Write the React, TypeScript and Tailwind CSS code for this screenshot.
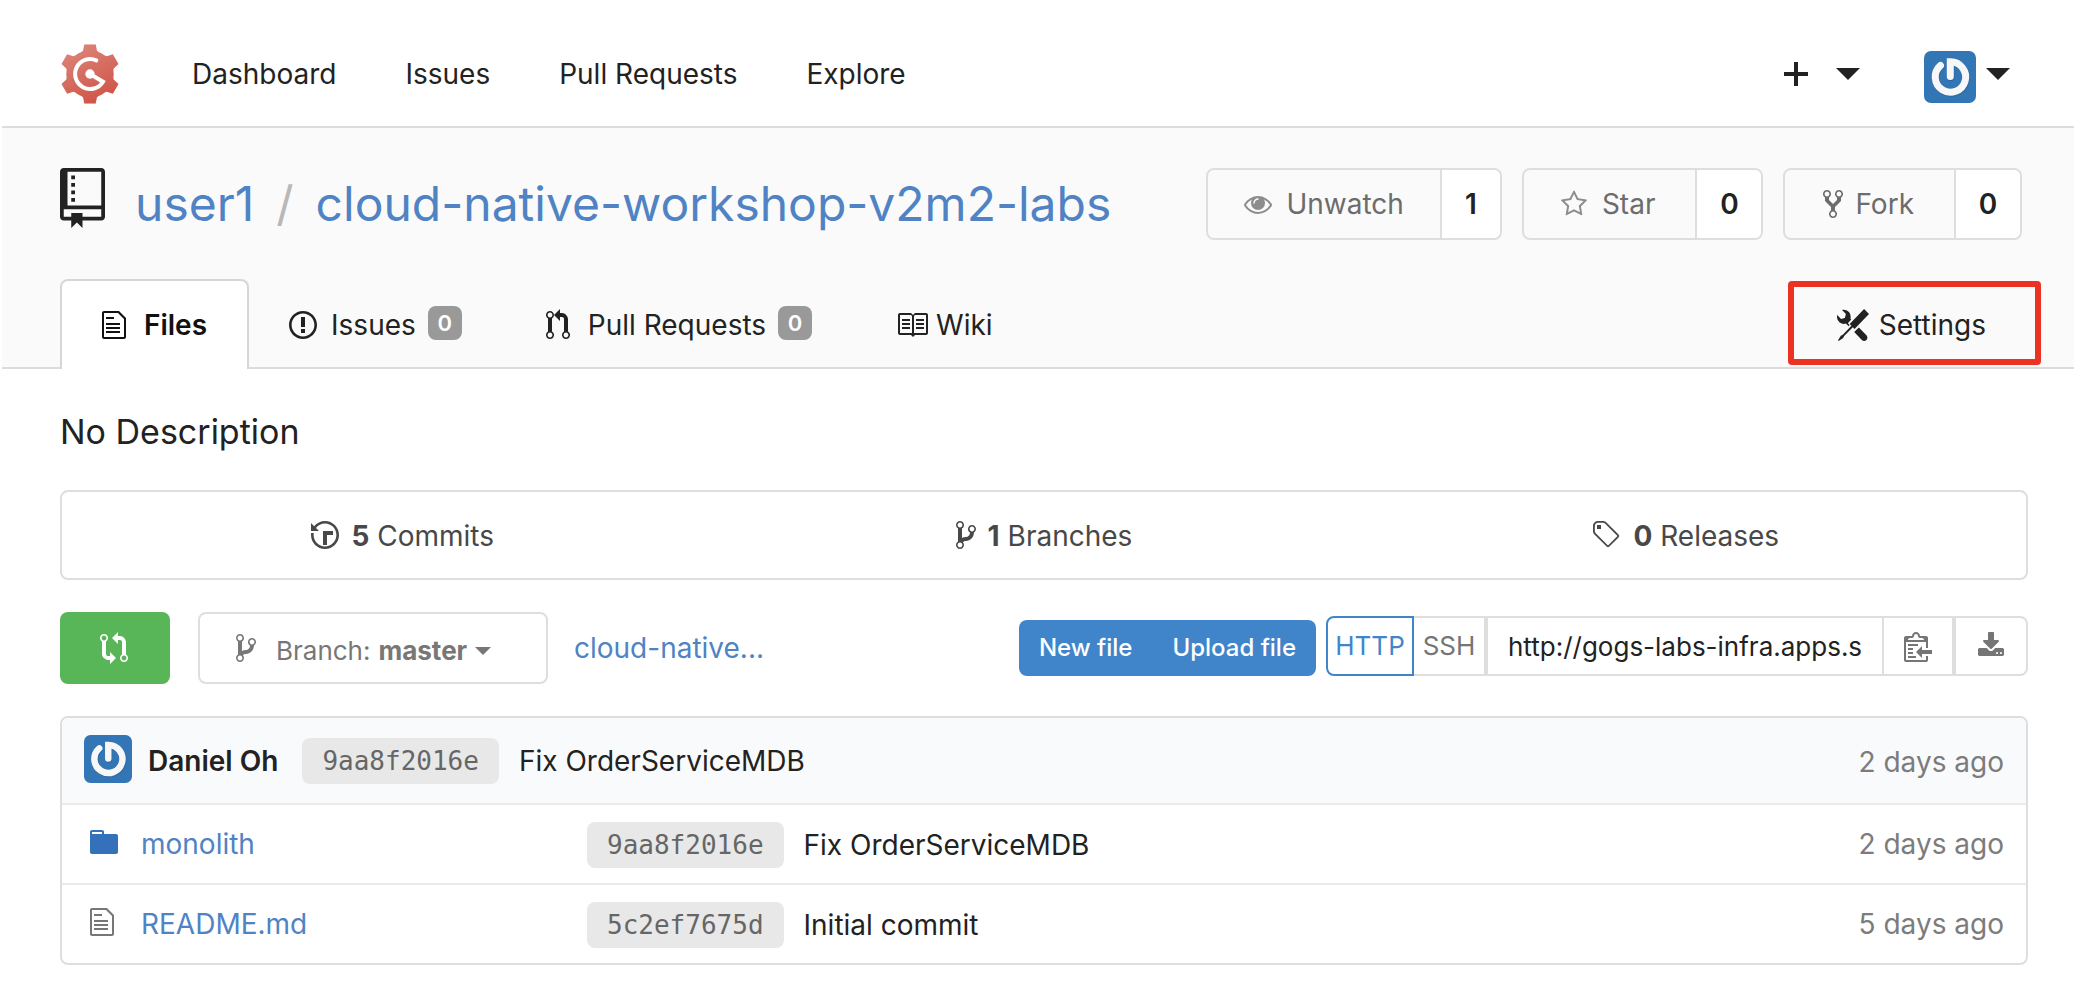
import type { ReactNode } from "react";

const ICONS = {
  repo: { box: "0 0 12 16", d: "M4 9H3V8h1v1zm0-3H3v1h1V6zm0-2H3v1h1V4zm0-2H3v1h1V2zm8-1v12c0 .55-.45 1-1 1H6v2l-1.5-1.5L3 16v-2H1c-.55 0-1-.45-1-1V1c0-.55.45-1 1-1h10c.55 0 1 .45 1 1zm-1 10H1v2h2v-1h3v1h5v-2zm0-10H2v9h9V1z" },
  file: { box: "0 0 12 16", d: "M6 5H2V4h4v1zM2 8h7V7H2v1zm0 2h7V9H2v1zm0 2h7v-1H2v1zm10-7.5V14c0 .55-.45 1-1 1H1c-.55 0-1-.45-1-1V2c0-.55.45-1 1-1h7.5L12 4.5zM11 5L8 2H1v12h10V5z" },
  issue: { box: "0 0 14 16", d: "M7 2.3c3.14 0 5.7 2.56 5.7 5.7s-2.56 5.7-5.7 5.7A5.71 5.71 0 0 1 1.3 8c0-3.14 2.56-5.7 5.7-5.7zM7 1C3.14 1 0 4.14 0 8s3.14 7 7 7 7-3.14 7-7-3.14-7-7-7zm1 3H6v5h2V4zm0 6H6v2h2v-2z" },
  pull: { box: "0 0 12 16", d: "M11 11.28V5c-.03-.78-.34-1.47-.94-2.06C9.46 2.35 8.78 2.03 8 2H7V0L4 3l3 3V4h1c.27.02.48.11.69.31.21.2.3.42.31.69v6.28A1.993 1.993 0 0 0 10 15a1.993 1.993 0 0 0 1-3.72zm-1 2.92c-.66 0-1.2-.55-1.2-1.2 0-.65.55-1.2 1.2-1.2.65 0 1.2.55 1.2 1.2 0 .65-.55 1.2-1.2 1.2zM4 3c0-1.11-.89-2-2-2a1.993 1.993 0 0 0-1 3.72v6.56A1.993 1.993 0 0 0 2 15a1.993 1.993 0 0 0 1-3.72V4.72c.59-.34 1-.98 1-1.72zm-.8 10c0 .66-.55 1.2-1.2 1.2-.65 0-1.2-.55-1.2-1.2 0-.65.55-1.2 1.2-1.2.65 0 1.2.55 1.2 1.2zM2 4.2C1.34 4.2.8 3.65.8 3c0-.65.55-1.2 1.2-1.2.65 0 1.2.55 1.2 1.2 0 .65-.55 1.2-1.2 1.2z" },
  book: { box: "0 0 16 16", d: "M3 5h4v1H3V5zm0 3h4V7H3v1zm0 2h4V9H3v1zm11-5h-4v1h4V5zm0 2h-4v1h4V7zm0 2h-4v1h4V9zm2-6v9c0 .55-.45 1-1 1H9.5l-1 1-1-1H2c-.55 0-1-.45-1-1V3c0-.55.45-1 1-1h5.5l1 1 1-1H15c.55 0 1 .45 1 1zm-8 .5L7.5 3H2v9h6V3.5zm7-.5H9.5l-.5.5V12h6V3z" },
  tools: { box: "0 0 16 16", d: "M4.48 7.27c.26.26 1.28 1.33 1.28 1.33l.56-.58-.88-.91 1.69-1.8s-.76-.74-.43-.45c.32-1.19.03-2.51-.87-3.44C4.93.5 3.66.2 2.52.51l1.93 2-.51 1.96-1.89.52-1.93-1.99C-.19 4.17.1 5.48 1 6.4c.94.98 2.29 1.26 3.48.87zm6.44 1.94l-2.33 2.3 3.84 3.98c.31.33.73.49 1.14.49.41 0 .82-.16 1.14-.49.63-.65.63-1.7 0-2.35l-3.79-3.93zM16 2.53L13.55 0 6.33 7.46l.88.91-4.31 4.46-.99.53-1.39 2.27.35.37 2.2-1.44.51-1.02L7.9 9.08l.88.91L16 2.53z" },
  history: { box: "0 0 14 16", d: "M8 13H6V6h5v2H8v5zM7 1C4.81 1 2.87 2.02 1.59 3.59L0 2v4h4L2.5 4.5C3.55 3.17 5.17 2.3 7 2.3c3.14 0 5.7 2.56 5.7 5.7s-2.56 5.7-5.7 5.7A5.71 5.71 0 0 1 1.3 8c0-.34.03-.67.09-1H.08C.03 7.33 0 7.66 0 8c0 3.86 3.14 7 7 7s7-3.14 7-7-3.14-7-7-7z" },
  branch: { box: "0 0 10 16", d: "M10 5c0-1.11-.89-2-2-2a1.993 1.993 0 0 0-1 3.72v.3c-.02.52-.23.98-.63 1.38-.4.4-.86.61-1.38.63-.83.02-1.48.16-2 .45V4.72a1.993 1.993 0 0 0-1-3.72C.88 1 0 1.89 0 3a2 2 0 0 0 1 1.72v6.56c-.59.35-1 .99-1 1.72 0 1.11.89 2 2 2 1.11 0 2-.89 2-2 0-.53-.2-1-.53-1.36.09-.06.48-.41.59-.47.25-.11.56-.17.94-.17 1.05-.05 1.95-.45 2.75-1.25S8.95 7.77 9 6.73h-.02C9.59 6.37 10 5.73 10 5zM2 1.8c.66 0 1.2.55 1.2 1.2 0 .65-.55 1.2-1.2 1.2C1.35 4.2.8 3.65.8 3c0-.65.55-1.2 1.2-1.2zm0 12.41c-.66 0-1.2-.55-1.2-1.2 0-.65.55-1.2 1.2-1.2.65 0 1.2.55 1.2 1.2 0 .65-.55 1.2-1.2 1.2zm6-8c-.66 0-1.2-.55-1.2-1.2 0-.65.55-1.2 1.2-1.2.65 0 1.2.55 1.2 1.2 0 .65-.55 1.2-1.2 1.2z" },
  fork: { box: "0 0 10 16", d: "M8 1a1.993 1.993 0 0 0-1 3.72V6L5 8 3 6V4.72A1.993 1.993 0 0 0 2 1a1.993 1.993 0 0 0-1 3.72V6.5l3 3v1.78A1.993 1.993 0 0 0 5 15a1.993 1.993 0 0 0 1-3.72V9.5l3-3V4.72A1.993 1.993 0 0 0 8 1zM2 4.2C1.34 4.2.8 3.65.8 3c0-.65.55-1.2 1.2-1.2.65 0 1.2.55 1.2 1.2 0 .65-.55 1.2-1.2 1.2zm3 10c-.66 0-1.2-.55-1.2-1.2 0-.65.55-1.2 1.2-1.2.65 0 1.2.55 1.2 1.2 0 .65-.55 1.2-1.2 1.2zm3-10c-.66 0-1.2-.55-1.2-1.2 0-.65.55-1.2 1.2-1.2.65 0 1.2.55 1.2 1.2 0 .65-.55 1.2-1.2 1.2z" },
  tag: { box: "0 0 15 16", d: "M7.73 1.73C7.26 1.26 6.62 1 5.96 1H3.5C2.13 1 1 2.13 1 3.5v2.47c0 .66.27 1.3.73 1.77l6.06 6.06c.39.39 1.02.39 1.41 0l4.59-4.59a.996.996 0 0 0 0-1.41L7.73 1.73zM2.38 7.09c-.31-.3-.47-.7-.47-1.13V3.5c0-.88.72-1.59 1.59-1.59h2.47c.42 0 .83.16 1.13.47l6.14 6.13-4.73 4.73-6.13-6.15zM3.01 3h2v2H3V3h.01z" },
  compare: { box: "0 0 14 16", d: "M5 12H4c-.27-.02-.48-.11-.69-.31-.21-.2-.3-.42-.31-.69V4.72A1.993 1.993 0 0 0 2 1a1.993 1.993 0 0 0-1 3.72V11c.03.78.34 1.47.94 2.06.6.59 1.28.91 2.06.94h1v2l3-3-3-3v2zM2 1.8c.66 0 1.2.55 1.2 1.2 0 .65-.55 1.2-1.2 1.2C1.35 4.2.8 3.65.8 3c0-.65.55-1.2 1.2-1.2zm11 9.48V5c-.03-.78-.34-1.47-.94-2.06-.6-.59-1.28-.91-2.06-.94H9V0L6 3l3 3V4h1c.27.02.48.11.69.31.21.2.3.42.31.69v6.28A1.993 1.993 0 0 0 12 15a1.993 1.993 0 0 0 1-3.72zm-1 2.92c-.66 0-1.2-.55-1.2-1.2 0-.65.55-1.2 1.2-1.2.65 0 1.2.55 1.2 1.2 0 .65-.55 1.2-1.2 1.2z" },
  clippy: { box: "0 0 14 16", d: "M2 13h4v1H2v-1zm5-6H2v1h5V7zm2 3V8l-3 3 3 3v-2h5v-2H9zM4.5 9H2v1h2.5V9zM2 12h2.5v-1H2v1zm9 1h1v2c-.02.28-.11.52-.3.7-.19.18-.42.28-.7.3H1c-.55 0-1-.45-1-1V4c0-.55.45-1 1-1h3c0-1.11.89-2 2-2 1.11 0 2 .89 2 2h3c.55 0 1 .45 1 1v5h-1V6H1v9h10v-2zM2 5h8c0-.55-.45-1-1-1H8c-.55 0-1-.45-1-1s-.45-1-1-1-1 .45-1 1-.45 1-1 1H3c-.55 0-1 .45-1 1z" },
  folder: { box: "0 0 14 16", d: "M13 4H7V3c0-.66-.31-1-1-1H1c-.55 0-1 .45-1 1v10c0 .55.45 1 1 1h12c.55 0 1-.45 1-1V5c0-.55-.45-1-1-1zM6 4H1V3h5v1z" },
  eye: { box: "0 0 1792 1792", d: "M1664 960q-152-236-381-353 61 104 61 225 0 185-131.500 316.500t-316.500 131.500-316.500-131.500-131.500-316.500q0-121 61-225-229 117-381 353 133 205 333.500 326.500t434.500 121.500 434.500-121.500 333.500-326.500zm-720-384q0-20-14-34t-34-14q-125 0-214.500 89.500t-89.500 214.500q0 20 14 34t34 14 34-14 14-34q0-86 61-147t147-61q20 0 34-14t14-34zm848 384q0 34-20 69-140 230-376.500 368.500t-499.500 138.500-499.500-139-376.500-368q-20-35-20-69t20-69q140-229 376.500-368t499.500-139 499.500 139 376.500 368q20 35 20 69z" },
  star: { box: "0 0 1792 1792", d: "M1201 1004l306-297-422-62-189-382-189 382-422 62 306 297-73 421 378-199 377 199zm527-357q0 22-26 48l-363 354 86 500q1 7 1 20 0 50-41 50-19 0-40-12l-449-236-449 236q-22 12-40 12-21 0-31.500-14.500t-10.500-35.500q0-6 2-20l86-500-364-354q-25-27-25-48 0-37 56-46l502-73 225-455q19-41 49-41t49 41l225 455 502 73q56 9 56 46z" },
  download: { box: "0 0 1792 1792", d: "M1344 1344q0-26-19-45t-45-19-45 19-19 45 19 45 45 19 45-19 19-45zm256 0q0-26-19-45t-45-19-45 19-19 45 19 45 45 19 45-19 19-45zm128-224v320q0 40-28 68t-68 28h-1472q-40 0-68-28t-28-68v-320q0-40 28-68t68-28h465l135 136q58 56 136 56t136-56l136-136h464q40 0 68 28t28 68zm-325-569q17 41-14 70l-448 448q-18 19-45 19t-45-19l-448-448q-31-29-14-70 17-39 59-39h256v-448q0-26 19-45t45-19h256q26 0 45 19t19 45v448h256q42 0 59 39z" },
};

type IconName = keyof typeof ICONS;

function Icon({ name, className }: { name: IconName; className: string }) {
  return (
    <svg viewBox={ICONS[name].box} fill="currentColor" aria-hidden="true" className={`shrink-0 ${className}`}>
      <path d={ICONS[name].d} />
    </svg>
  );
}

function Caret({ className }: { className: string }) {
  return (
    <svg viewBox="0 0 24 12" fill="currentColor" aria-hidden="true" className={`shrink-0 ${className}`}>
      <path d="M0 0h24L12 12z" />
    </svg>
  );
}

function GogsLogo() {
  return (
    <svg viewBox="-90 -90 180 180" aria-hidden="true" className="size-[60px]">
      <defs>
        <linearGradient id="gear-fill" gradientUnits="userSpaceOnUse" x1="-40" y1="-85" x2="40" y2="85">
          <stop offset="0" stopColor="#dc8378" />
          <stop offset="1" stopColor="#cf5346" />
        </linearGradient>
        <clipPath id="gear-shape">
          <circle r="71" />
          {[0, 60, 120, 180, 240, 300].map((angle) => (
            <path key={angle} d="M-17 -89H17L21 -70L36 -58L0 0L-36 -58L-21 -70Z" transform={`rotate(${angle})`} />
          ))}
        </clipPath>
      </defs>
      <rect x="-90" y="-90" width="180" height="180" fill="url(#gear-fill)" clipPath="url(#gear-shape)" />
      <path d="M19 -41A45 45 0 1 0 39 23L0 0" fill="none" stroke="#fff" strokeWidth="12" strokeLinecap="round" strokeLinejoin="miter" />
      <circle r="14" fill="#fff" />
    </svg>
  );
}

function Avatar({ className }: { className: string }) {
  return (
    <svg viewBox="0 0 52 52" role="img" aria-label="Daniel Oh" className={`shrink-0 ${className}`}>
      <rect width="52" height="52" rx="7" fill="#3276b5" />
      <g fill="none" strokeLinecap="round" strokeWidth="7">
        <path d="M17.200 15.500A15.200 15.200 0 1 0 27 11.800V26.500" stroke="#225c94" strokeOpacity="0.5" />
        <path d="M16.500 14.500A15.200 15.200 0 1 0 26.300 10.800V25.500" stroke="#f7f7f7" />
      </g>
    </svg>
  );
}

function CountButton({ icon, iconClass, label, count, className, countClass }: { icon: IconName; iconClass: string; label: string; count: number; className: string; countClass: string }) {
  return (
    <div className="flex h-[72px] overflow-hidden rounded-lg border-2 border-[#dededf]">
      <button type="button" className={`flex items-center text-[#6c6c6c] ${className}`}>
        <Icon name={icon} className={iconClass} />
        {label}
      </button>
      <a href="#" className={`flex items-center justify-center border-l-2 border-[#dededf] bg-white font-semibold text-[#222] ${countClass}`}>
        {count}
      </a>
    </div>
  );
}

function Tab({ icon, iconClass, label, count }: { icon: IconName; iconClass: string; label: string; count?: number }) {
  return (
    <a href="#" className="flex items-center px-10 pt-0.5">
      <Icon name={icon} className={iconClass} />
      {label}
      {count !== undefined && (
        <span className="mr-1 mb-1 ml-3 flex size-[34px] items-center justify-center rounded-lg bg-[#999] text-[22px] font-semibold text-white">{count}</span>
      )}
    </a>
  );
}

function Hash({ children }: { children: string }) {
  return (
    <a href="#" className="flex h-[46px] items-center rounded-lg bg-[#e8e8e8] px-5 font-['DejaVu_Sans_Mono',monospace] text-[26px] font-normal text-[#666]">
      {children}
    </a>
  );
}

function Stat({ icon, iconClass, value, label }: { icon: IconName; iconClass: string; value: number; label: string }) {
  return (
    <a href="#" className="flex items-center justify-center">
      <Icon name={icon} className={iconClass} />
      <span className="pt-0.5">
        <b className="font-bold">{value}</b> {label}
      </span>
    </a>
  );
}

function FileRow({ icon, name, hash, message, age }: { icon: ReactNode; name: string; hash: string; message: string; age: string }) {
  return (
    <tr className="h-20">
      <td className="border-t-2 border-[#ebebeb] pl-7">
        <div className="flex items-center text-[#4f83c4]">
          <span className="flex w-[51px] pb-1">{icon}</span>
          <a href="#">{name}</a>
        </div>
      </td>
      <td className="border-t-2 border-[#ebebeb]">
        <div className="flex items-center gap-5 pt-0.5">
          <Hash>{hash}</Hash>
          {message}
        </div>
      </td>
      <td className="border-t-2 border-[#ebebeb] pr-[22px] text-right text-[#7c7c7c]">{age}</td>
    </tr>
  );
}

export default function App() {
  return (
    <div className="bg-white pr-[18px] pl-0.5 font-['Inter',sans-serif] text-[28px] leading-9 text-[#222]">
      <header className="flex h-32 items-center border-b-2 border-[#dcdcdc] pt-[22px] pr-[64px] pl-[58px]">
        <a href="#" aria-label="Gogs">
          <GogsLogo />
        </a>
        <nav className="ml-[72px] flex gap-[69px]">
          <a href="#">Dashboard</a>
          <a href="#">Issues</a>
          <a href="#">Pull Requests</a>
          <a href="#">Explore</a>
        </nav>
        <div className="ml-auto flex items-center gap-16">
          <button type="button" aria-label="Create" className="flex items-center gap-7">
            <svg viewBox="0 0 24 24" fill="currentColor" className="size-6">
              <path d="M10 0h4v10h10v4H14v10h-4V14H0v-4h10z" />
            </svg>
            <Caret className="h-3 w-6" />
          </button>
          <button type="button" aria-label="Account" className="flex items-center gap-2.5">
            <Avatar className="mt-1.5 size-[52px]" />
            <Caret className="h-3 w-6" />
          </button>
        </div>
      </header>

      <section className="border-b-2 border-[#dcdcdc] bg-[#fafafa] px-[58px] pt-10 pr-[46px]">
        <div className="flex pr-1.5">
          <Icon name="repo" className="h-[60px] w-[45px]" />
          <h1 className="ml-[30px] flex text-5xl leading-[72px] text-[#4f83c4]">
            <a href="#">user1</a>
            <span className="mx-[22px] text-[#b8b8b8]">/</span>
            <a href="#">cloud-native-workshop-v2m2-labs</a>
          </h1>
          <div className="ml-auto flex gap-5">
            <CountButton icon="eye" iconClass="mr-3.5 size-7 text-[#8c8c8c]" label="Unwatch" count={1} className="pr-9 pl-9" countClass="w-[60px]" />
            <CountButton icon="star" iconClass="mr-3.5 size-7 text-[#8c8c8c]" label="Star" count={0} className="pr-10 pl-9" countClass="w-[66px]" />
            <CountButton icon="fork" iconClass="mr-3 h-8 w-5" label="Fork" count={0} className="pr-10 pl-[38px]" countClass="w-[66px]" />
          </div>
        </div>
        <nav className="mt-[39px] -mb-0.5 flex h-[90px]">
          <a href="#" className="flex items-center rounded-t-lg border-2 border-b-0 border-[#d6d6d6] bg-white px-10 font-semibold text-[#111]">
            <Icon name="file" className="mr-[18px] h-8 w-6" />
            Files
          </a>
          <Tab icon="issue" iconClass="mr-3.5 h-8 w-7" label="Issues" count={0} />
          <Tab icon="pull" iconClass="mr-[18px] h-8 w-6" label="Pull Requests" count={0} />
          <Tab icon="book" iconClass="mr-2 size-8" label="Wiki" />
          <div className="relative ml-auto flex pr-0.5">
            <Tab icon="tools" iconClass="mr-2.5 size-8" label="Settings" />
            <span className="pointer-events-none absolute top-0.5 right-[-13px] bottom-1 left-[-9px] rounded border-[6px] border-[#ec3223]" />
          </div>
        </nav>
      </section>

      <main className="mr-[46px] ml-[58px]">
        <p className="pt-[41px] text-[34px] leading-[44px]">No Description</p>

        <div className="mt-9 grid h-[90px] grid-cols-3 rounded-lg border-2 border-[#dedede] px-5 text-[#484848]">
          <Stat icon="history" iconClass="mr-3 h-8 w-7" value={5} label="Commits" />
          <Stat icon="branch" iconClass="mr-3 h-8 w-5" value={1} label="Branches" />
          <Stat icon="tag" iconClass="mr-3 h-8 w-[30px]" value={0} label="Releases" />
        </div>

        <div className="mt-8 flex h-[72px] items-center">
          <button type="button" aria-label="Compare" className="flex h-[72px] w-[110px] items-center justify-center rounded-lg bg-[#58b558] pr-0.5 text-white">
            <Icon name="compare" className="h-8 w-7" />
          </button>
          <label className="ml-7 flex h-[72px] w-[350px] items-center rounded-lg border-2 border-[#dedede] pt-1.5 pl-9 text-[26px] text-[#777]">
            <Icon name="branch" className="mr-5 mb-1.5 h-8 w-5" />
            Branch:
            <select defaultValue="master" className="ml-2 field-sizing-content appearance-none bg-transparent font-bold outline-none">
              <option>master</option>
            </select>
            <Caret className="ml-2 h-2 w-4" />
          </label>
          <a href="#" className="ml-[26px] text-[#4f83c4]">cloud-native...</a>
          <div className="mb-1 ml-auto flex items-end gap-2.5">
            <div className="flex h-14 items-center gap-10 rounded-lg bg-[#4085ca] px-5 text-2xl font-medium text-white">
              <button type="button">New file</button>
              <button type="button">Upload file</button>
            </div>
            <div className="flex h-[60px]">
              <button type="button" className="w-[88px] rounded-l-lg border-2 border-[#4085ca] text-[26px] text-[#4085ca]">HTTP</button>
              <button type="button" className="w-[72px] border-y-2 border-r-2 border-[#dedede] text-[26px] text-[#757575]">SSH</button>
              <div className="w-[396px] border-y-2 border-l-2 border-[#dedede] px-5">
                <input aria-label="Clone URL" readOnly defaultValue="http://gogs-labs-infra.apps.seoul.openshift.example.com/user1/cloud-native-workshop-v2m2-labs.git" className="h-full w-full bg-transparent text-[26px] outline-none" />
              </div>
              <button type="button" aria-label="Copy" className="flex w-[74px] items-center justify-center border-2 border-r-4 border-[#dedede] text-[#757575]">
                <Icon name="clippy" className="h-8 w-7" />
              </button>
              <button type="button" aria-label="Download" className="flex w-[72px] items-center justify-center rounded-r-lg border-2 border-l-0 border-[#dedede] text-[#757575]">
                <Icon name="download" className="size-7" />
              </button>
            </div>
          </div>
        </div>

        <div className="mt-8 overflow-hidden rounded-lg border-2 border-[#dedede]">
          <table className="w-full table-fixed border-separate border-spacing-0 text-left">
            <colgroup>
              <col className="w-[525px]" />
              <col />
              <col className="w-[240px]" />
            </colgroup>
            <thead>
              <tr className="h-[85px] bg-[#f9fafc]">
                <th colSpan={2} className="pl-[22px] font-normal">
                  <div className="flex items-center">
                    <Avatar className="mr-4 mb-1 size-12" />
                    <strong className="mr-6 font-semibold">Daniel Oh</strong>
                    <Hash>9aa8f2016e</Hash>
                    <span className="ml-5">Fix OrderServiceMDB</span>
                  </div>
                </th>
                <th className="pt-0.5 pr-[22px] text-right font-normal text-[#7c7c7c]">2 days ago</th>
              </tr>
            </thead>
            <tbody>
              <FileRow icon={<Icon name="folder" className="h-8 w-7 text-[#3570bb]" />} name="monolith" hash="9aa8f2016e" message="Fix OrderServiceMDB" age="2 days ago" />
              <FileRow icon={<Icon name="file" className="h-8 w-6 text-[#777]" />} name="README.md" hash="5c2ef7675d" message="Initial commit" age="5 days ago" />
            </tbody>
          </table>
        </div>
      </main>
    </div>
  );
}
